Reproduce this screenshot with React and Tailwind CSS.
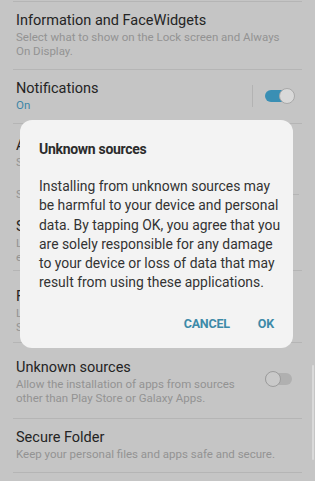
import React from 'react';

const Toggle = ({ on }) => (
    <div className="relative w-[30px] h-[16px] flex items-center">
        <div className={`w-[27px] h-[12px] rounded-full ${on ? 'bg-[#3a8fb4]' : 'bg-[#b0b0b0]'}`} />
        <div
            className={`absolute top-0 w-[16px] h-[16px] rounded-full border ${
                on ? 'right-0 bg-[#d9d9d9] border-[#a9a9a9]' : 'left-0 bg-[#c9c9c9] border-[#9c9c9c]'
            }`}
        />
    </div>
);

const Row = ({ title, lines = [], sub, pad, toggle, divider = true }) => (
    <div className={`${divider ? 'border-b border-[#b5b5b5]' : ''} mx-[13px]`}>
        <div className={`flex items-center px-[3px] ${pad}`}>
            <div className="flex-1 min-w-0">
                <div className="text-[14.5px] leading-[20px] text-[#242424]">{title}</div>
                {sub && <div className="text-[11.5px] leading-[13.5px] text-[#3d86a6]">{sub}</div>}
                {lines.map((l) => (
                    <div key={l} className="text-[11.5px] leading-[13.5px] text-[#939393] whitespace-nowrap">{l}</div>
                ))}
            </div>
            {toggle}
        </div>
    </div>
);

export default function App() {
    return (
        <div
            className="relative w-[315px] h-[481px] overflow-hidden bg-[#c5c5c5]"
            style={{ fontFamily: 'Roboto, "Noto Sans", sans-serif' }}
        >
            {/* Settings list (dimmed) */}
            <div className="h-[2px] mx-[13px] border-b border-[#b5b5b5]" />
            <Row
                title="Information and FaceWidgets"
                lines={['Select what to show on the Lock screen and Always', 'On Display.']}
                pad="pt-[9px] pb-[11px]"
            />
            <Row
                title="Notifications"
                sub="On"
                pad="pt-[9px] pb-[10px]"
                toggle={
                    <div className="flex items-center gap-[12px] mr-[4px]">
                        <div className="w-px h-[22px] bg-[#b3b3b3]" />
                        <Toggle on />
                    </div>
                }
            />
            <Row
                title="Always On Display"
                lines={['Show information while the screen is off.']}
                pad="pt-[12px] pb-[8px]"
                divider={false}
            />
            <div className="flex items-center gap-[8px] mx-[16px] h-[35px]">
                <span className="text-[11.5px] text-[#939393]">Security</span>
                <div className="flex-1 h-px bg-[#b5b5b5]" />
            </div>
            <Row
                title="Samsung Pass"
                lines={['Log in to websites and apps quickly and', 'easily using your biometric data.']}
                pad="pt-[5px] pb-[6px]"
            />
            <Row
                title="Find My Mobile"
                lines={['Locate and control your device remotely using', 'Samsung account.']}
                pad="pt-[16px] pb-[8px]"
            />
            <Row
                title="Unknown sources"
                lines={['Allow the installation of apps from sources', 'other than Play Store or Galaxy Apps.']}
                pad="pt-[15px] pb-[13px]"
                toggle={
                    <div className="mr-[4px] mb-[6px]">
                        <Toggle />
                    </div>
                }
            />
            <Row
                title="Secure Folder"
                lines={['Keep your personal files and apps safe and secure.']}
                pad="pt-[9px] pb-[10px]"
            />

            {/* Scroll indicator */}
            <div className="absolute right-[1px] top-[365px] w-[2px] h-[95px] rounded-full bg-[#dadada]" />

            {/* Dialog */}
            <div className="absolute left-[20px] top-[120px] w-[273px] h-[228px] rounded-[12px] bg-[#f3f3f3] flex flex-col">
                <div className="pl-[19px] pt-[19px] text-[14px] leading-[20px] font-bold tracking-[-0.3px] text-[#2b2b2b]">
                    Unknown sources
                </div>
                <div className="pl-[19px] pr-[10px] pt-[18px] text-[13.9px] leading-[19.3px] text-[#333333]">
                    Installing from unknown sources may be harmful to your device and personal data. By tapping OK, you
                    agree that you are solely responsible for any damage to your device or loss of data that may result
                    from using these applications.
                </div>
                <div className="flex justify-end items-center gap-[28px] pr-[19px] pt-[22px] text-[12.5px] font-bold tracking-[-0.2px] text-[#3d8aa8]">
                    <span>CANCEL</span>
                    <span>OK</span>
                </div>
            </div>
        </div>
    );
}
